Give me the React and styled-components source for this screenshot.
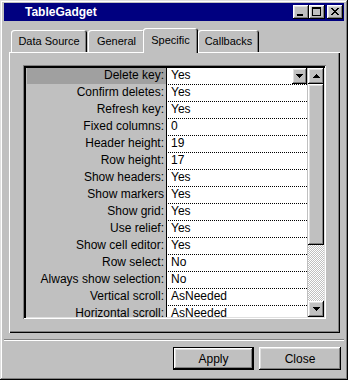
import React from 'react'
import styled, { createGlobalStyle } from 'styled-components'

const GlobalStyle = createGlobalStyle`
  html, body {
    margin: 0;
    padding: 0;
    background: #c0c0c0;
  }
  body {
    font-family: "Liberation Sans", Arial, sans-serif;
    font-size: 12px;
    color: #000;
  }
  * {
    box-sizing: border-box;
  }
`

const tabs = [
  { label: 'Data Source', w: 76, mr: 1 },
  { label: 'General', w: 57 },
  { label: 'Specific', w: 55, ml: -2, active: true },
  { label: 'Callbacks', w: 61 },
]

const rows = [
  ['Delete key:', 'Yes'],
  ['Confirm deletes:', 'Yes'],
  ['Refresh key:', 'Yes'],
  ['Fixed columns:', '0'],
  ['Header height:', '19'],
  ['Row height:', '17'],
  ['Show headers:', 'Yes'],
  ['Show markers', 'Yes'],
  ['Show grid:', 'Yes'],
  ['Use relief:', 'Yes'],
  ['Show cell editor:', 'Yes'],
  ['Row select:', 'No'],
  ['Always show selection:', 'No'],
  ['Vertical scroll:', 'AsNeeded'],
  ['Horizontal scroll:', 'AsNeeded'],
]

const raised = `
  box-shadow: inset -1px -1px #000, inset 1px 1px #fff, inset -2px -2px #808080, inset 2px 2px #dfdfdf;
`

const MinIcon = () => (
  <svg width="16" height="14" shapeRendering="crispEdges">
    <rect x="4" y="9" width="6" height="2" fill="#000" />
  </svg>
)

const MaxIcon = () => (
  <svg width="16" height="14" shapeRendering="crispEdges">
    <rect x="3" y="2" width="9" height="2" fill="#000" />
    <rect x="3" y="2" width="1" height="9" fill="#000" />
    <rect x="11" y="2" width="1" height="9" fill="#000" />
    <rect x="3" y="10" width="9" height="1" fill="#000" />
  </svg>
)

const CloseIcon = () => (
  <svg width="16" height="14" shapeRendering="crispEdges">
    {[0, 1, 2, 3, 4, 5, 6].map((i) => (
      <g key={i}>
        <rect x={4 + i} y={3 + i} width="2" height="1" fill="#000" />
        <rect x={10 - i} y={3 + i} width="2" height="1" fill="#000" />
      </g>
    ))}
  </svg>
)

const Arrow = ({ up }) => (
  <svg width="7" height="4" shapeRendering="crispEdges">
    <path d={up ? 'M3 0h1v1h1v1h1v1h1v1H0V3h1V2h1V1h1z' : 'M0 0h7v1H6v1H5v1H4v1H3V3H2V2H1V1H0z'} fill="#000" />
  </svg>
)

const App = () => {
  return (
    <>
      <GlobalStyle />
      <Window>
        <TitleBar>
          <Title>TableGadget</Title>
          <CaptionButton><MinIcon /></CaptionButton>
          <CaptionButton><MaxIcon /></CaptionButton>
          <CaptionButton $gap={2}><CloseIcon /></CaptionButton>
        </TitleBar>

        <TabStrip>
          {tabs.map((t) => (
            <Tab key={t.label} $w={t.w} $ml={t.ml} $mr={t.mr} $active={t.active}>
              {t.label}
            </Tab>
          ))}
        </TabStrip>

        <Panel>
          <GridBox>
            <Table>
              {rows.map(([label, value], i) => (
                <Row key={label}>
                  <LabelCell>
                    <LabelText $selected={i === 0}>{label}</LabelText>
                  </LabelCell>
                  <ValueCell>
                    <ValueText>{value}</ValueText>
                    {i === 0 && (
                      <DropButton>
                        <Arrow />
                      </DropButton>
                    )}
                  </ValueCell>
                </Row>
              ))}
            </Table>
            <ScrollBar>
              <ScrollButton><Arrow up /></ScrollButton>
              <Thumb />
              <Track />
              <ScrollButton><Arrow /></ScrollButton>
            </ScrollBar>
          </GridBox>
        </Panel>

        <Separator />

        <ButtonRow>
          <PushButton $w={81} $default>Apply</PushButton>
          <PushButton $w={82}>Close</PushButton>
        </ButtonRow>
      </Window>
    </>
  )
}

export default App

const Window = styled.div`
  width: 348px;
  height: 380px;
  padding: 3px 4px;
  background: #c0c0c0;
  box-shadow: inset -1px -1px #000, inset 1px 1px #dfdfdf, inset -2px -2px #808080, inset 2px 2px #fff;
  display: flex;
  flex-direction: column;
`

const TitleBar = styled.div`
  height: 18px;
  background: #000080;
  color: #fff;
  display: flex;
  align-items: center;
  padding: 0 1px 0 21px;
  font-weight: bold;
  font-size: 12px;
`

const Title = styled.span`
  flex: 1;
`

const CaptionButton = styled.div`
  width: 16px;
  height: 14px;
  background: #c0c0c0;
  margin-left: ${(p) => p.$gap || 0}px;
  display: flex;
  ${raised}
`

const TabStrip = styled.div`
  display: flex;
  align-items: flex-end;
  height: 24px;
  margin: 7px 0 0 5px;
  padding-left: 2px;
`

const Tab = styled.div`
  position: relative;
  z-index: ${(p) => (p.$active ? 1 : 0)};
  width: ${(p) => p.$w}px;
  height: ${(p) => (p.$active ? 25 : 22)}px;
  margin-bottom: ${(p) => (p.$active ? -1 : 0)}px;
  margin-left: ${(p) => p.$ml || 0}px;
  margin-right: ${(p) => p.$mr || 0}px;
  padding-bottom: ${(p) => (p.$active ? 2 : 0)}px;
  background: #c0c0c0;
  border-radius: 3px 3px 0 0;
  box-shadow: inset 1px 1px #fff, inset -1px 0 #000, inset -2px 0 #808080;
  font-size: 11px;
  display: flex;
  align-items: center;
  justify-content: center;
  white-space: nowrap;
`

const Panel = styled.div`
  height: 281px;
  margin: 0 4px 0 5px;
  padding: 13px 14px 14px 14px;
  box-shadow: inset 1px 1px #fff, inset -1px -1px #000, inset -2px -2px #808080;
`

const GridBox = styled.div`
  height: 254px;
  padding: 3px 2px 2px 3px;
  display: flex;
  box-shadow: inset 1px 1px #808080, inset -1px -1px #fff, inset 3px 3px #000, inset -2px -2px #dfdfdf;
`

const Table = styled.div`
  width: 282px;
  overflow: hidden;
  padding-right: 1px;
`

const Row = styled.div`
  display: flex;
  height: 17px;
`

const LabelCell = styled.div`
  width: 140px;
  padding-left: 1px;
`

const LabelText = styled.div`
  height: 16px;
  line-height: 15px;
  padding-right: 2px;
  text-align: right;
  white-space: nowrap;
  overflow: hidden;
  background: ${(p) => (p.$selected ? '#a0a0a0' : 'transparent')};
`

const ValueCell = styled.div`
  width: 141px;
  height: 17px;
  display: flex;
  align-items: flex-start;
  background: #fff;
  border-left: 1px solid #000;
  border-bottom: 1px dotted #000;
`

const ValueText = styled.span`
  flex: 1;
  padding-left: 4px;
  line-height: 15px;
  white-space: nowrap;
`

const DropButton = styled.div`
  width: 15px;
  height: 16px;
  background: #c0c0c0;
  display: flex;
  align-items: center;
  justify-content: center;
  ${raised}
`

const ScrollBar = styled.div`
  width: 16px;
  display: flex;
  flex-direction: column;
`

const ScrollButton = styled.div`
  height: 16px;
  background: #c0c0c0;
  display: flex;
  align-items: center;
  justify-content: center;
  ${raised}
`

const Thumb = styled.div`
  height: 161px;
  background: #c0c0c0;
  ${raised}
`

const Track = styled.div`
  flex: 1;
  background: repeating-conic-gradient(#fff 0 25%, #c0c0c0 0 50%) 0 0 / 2px 2px;
`

const Separator = styled.div`
  height: 2px;
  margin-top: 6px;
  border-top: 1px solid #808080;
  border-bottom: 1px solid #fff;
`

const ButtonRow = styled.div`
  display: flex;
  justify-content: flex-end;
  gap: 5px;
  margin-top: 6px;
  padding-right: 3px;
`

const PushButton = styled.div`
  width: ${(p) => p.$w}px;
  height: 23px;
  background: #c0c0c0;
  display: flex;
  align-items: center;
  justify-content: center;
  font-size: 12px;
  border: ${(p) => (p.$default ? '1px solid #000' : 'none')};
  ${raised}
`
